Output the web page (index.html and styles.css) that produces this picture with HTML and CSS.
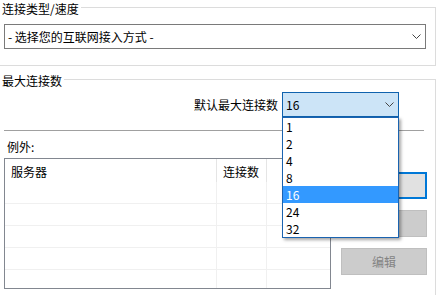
FILE: index.html
```html
<!DOCTYPE html>
<html lang="zh-CN">
<head>
    <meta charset="UTF-8">
    <meta name="viewport" content="width=device-width, initial-scale=1.0">
    <title>连接设置</title>
    <link rel="stylesheet" href="styles.css">
</head>
<body>
    <fieldset class="group">
        <legend>连接类型/速度</legend>
        <div class="combo combo-type">
            <span class="combo-text">- 选择您的互联网接入方式 -</span>
            <svg class="chevron" width="9" height="5" viewBox="0 0 9 5"><polyline points="0.5,0.5 4.5,4.5 8.5,0.5" fill="none" stroke="#444" stroke-width="1"/></svg>
        </div>
    </fieldset>

    <fieldset class="group group-max">
        <legend>最大连接数</legend>
        <div class="default-row">
            <span class="default-label">默认最大连接数</span>
            <div class="combo combo-open">
                <span class="combo-text">16</span>
                <svg class="chevron" width="9" height="5" viewBox="0 0 9 5"><polyline points="0.5,0.5 4.5,4.5 8.5,0.5" fill="none" stroke="#444" stroke-width="1"/></svg>
                <ul class="dropdown">
                    <li>1</li>
                    <li>2</li>
                    <li>4</li>
                    <li>8</li>
                    <li class="selected">16</li>
                    <li>24</li>
                    <li>32</li>
                </ul>
            </div>
        </div>
        <div class="separator"></div>

        <div class="exceptions">
            <div class="exceptions-main">
                <div class="exceptions-label">例外:</div>
                <div class="listview">
                    <div class="lv-row lv-header">
                        <div class="lv-cell col-server">服务器</div>
                        <div class="lv-cell col-count">连接数</div>
                        <div class="lv-cell col-rest"></div>
                    </div>
                    <div class="lv-row">
                        <div class="lv-cell col-server"></div>
                        <div class="lv-cell col-count"></div>
                        <div class="lv-cell col-rest"></div>
                    </div>
                    <div class="lv-row">
                        <div class="lv-cell col-server"></div>
                        <div class="lv-cell col-count"></div>
                        <div class="lv-cell col-rest"></div>
                    </div>
                    <div class="lv-row">
                        <div class="lv-cell col-server"></div>
                        <div class="lv-cell col-count"></div>
                        <div class="lv-cell col-rest"></div>
                    </div>
                    <div class="lv-row">
                        <div class="lv-cell col-server"></div>
                        <div class="lv-cell col-count"></div>
                        <div class="lv-cell col-rest"></div>
                    </div>
                    <div class="lv-row">
                        <div class="lv-cell col-server"></div>
                        <div class="lv-cell col-count"></div>
                        <div class="lv-cell col-rest"></div>
                    </div>
                </div>
            </div>
            <div class="buttons">
                <button class="btn btn-default">添加</button>
                <button class="btn" disabled>删除</button>
                <button class="btn" disabled>编辑</button>
            </div>
        </div>
    </fieldset>
</body>
</html>
```

FILE: styles.css
```css
body {
    margin: 0;
    height: 295px;
    overflow: hidden;
    background: #ffffff;
    color: #000000;
    font-family: "Microsoft YaHei", "Noto Sans CJK SC", sans-serif;
    font-size: 12px;
    line-height: 14px;
}
.group {
    box-sizing: border-box;
    width: 437px;
    min-width: 0;
    margin: 0 0 0 -1px;
    padding: 0 0 16px 0;
    border: 1px solid #dcdcdc;
}
.group legend {
    height: 14px;
    padding: 0 2px;
    margin: 0;
    line-height: 17px;
}
.group-max {
    margin-top: 6px;
    padding-bottom: 40px;
}
.combo {
    box-sizing: border-box;
    display: flex;
    align-items: center;
    height: 25px;
    padding: 0 4px 0 3px;
    border: 1px solid #7a7a7a;
    background: #ffffff;
}
.combo-type {
    width: 422px;
    margin: 10px 0 0 4px;
}
.chevron {
    margin-left: auto;
}
.default-row {
    display: flex;
    align-items: center;
    justify-content: flex-end;
    margin: 6px 36px 0 0;
}
.default-label {
    margin-right: 4px;
}
.combo-open {
    position: relative;
    width: 117px;
    background: #cce4f7;
    border-color: #0f62ae;
}
.dropdown {
    position: absolute;
    top: calc(100% + 1px);
    left: -1px;
    box-sizing: border-box;
    width: 117px;
    margin: 0;
    padding: 0;
    list-style: none;
    background: #ffffff;
    border: 1px solid #1a63b0;
    box-shadow: 2px 2px 3px rgba(0, 0, 0, 0.35);
    z-index: 2;
}
.dropdown li {
    height: 17px;
    line-height: 17px;
    padding-left: 3px;
}
.dropdown li.selected {
    background: #3399ff;
    color: #ffffff;
}
.separator {
    height: 1px;
    margin: 13px 11px 9px 4px;
    background: #a0a0a0;
}
.exceptions {
    display: flex;
}
.exceptions-main {
    margin-left: 4px;
}
.exceptions-label {
    padding-left: 3px;
}
.listview {
    box-sizing: border-box;
    width: 327px;
    height: 131px;
    margin-top: 4px;
    border: 1px solid #828790;
    overflow: hidden;
}
.lv-row {
    display: flex;
    box-sizing: border-box;
    height: 22px;
    border-bottom: 1px solid #f0f0f0;
}
.lv-header {
    height: 23px;
    border-bottom: none;
}
.lv-cell {
    box-sizing: border-box;
    padding-left: 6px;
    border-right: 1px solid #f0f0f0;
}
.lv-header .lv-cell {
    padding-top: 6px;
    border-right-color: #e5e5e5;
}
.col-server {
    width: 212px;
}
.col-count {
    width: 50px;
}
.col-rest {
    flex: 1;
    border-right: none;
}
.buttons {
    display: flex;
    flex-direction: column;
    gap: 11px;
    margin-left: 10px;
    padding-top: 32px;
}
.btn {
    box-sizing: border-box;
    width: 86px;
    height: 27px;
    padding: 0;
    font-family: inherit;
    font-size: 12px;
    background: #e1e1e1;
    border: 1px solid #adadad;
    color: #000000;
}
.btn-default {
    border: 2px solid #0078d7;
}
.btn:disabled {
    background: #cccccc;
    border-color: #bfbfbf;
    color: #838383;
}
```
